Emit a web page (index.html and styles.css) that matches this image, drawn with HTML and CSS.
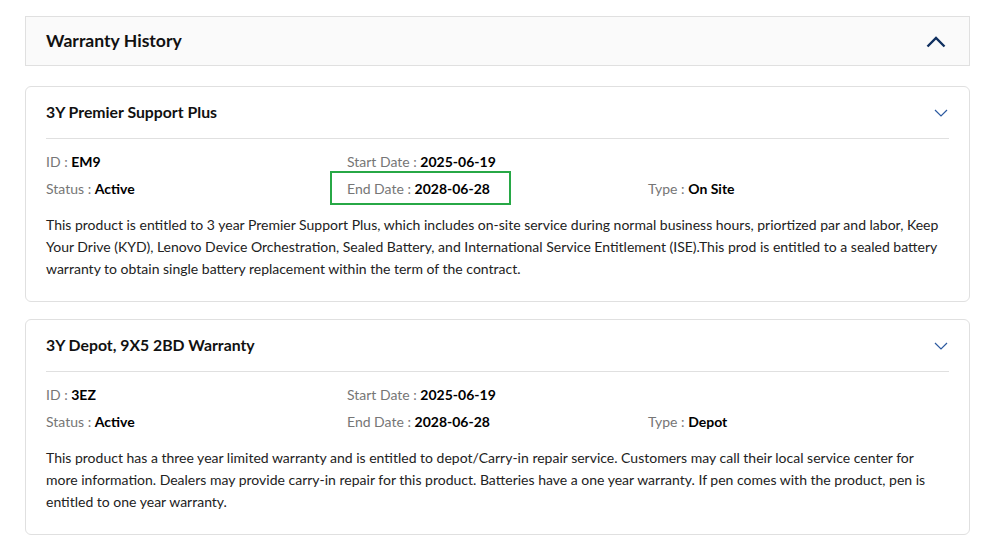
FILE: index.html
```html
<!DOCTYPE html>
<html lang="en">
<head>
  <meta charset="UTF-8">
  <meta name="viewport" content="width=device-width, initial-scale=1.0">
  <title>Warranty History</title>
  <link rel="stylesheet" href="styles.css">
</head>
<body>
  <div class="warranty">
    <div class="warranty-head">
      <h2>Warranty History</h2>
      <svg class="chev-up" width="20" height="12" viewBox="0 0 20 12"><path d="M1.5 10.5 L10 2 L18.5 10.5" fill="none" stroke="#0f2f5f" stroke-width="2.4"/></svg>
    </div>

    <div class="card">
      <div class="card-head">
        <h3>3Y Premier Support Plus</h3>
        <svg class="chev-down" width="14" height="8" viewBox="0 0 14 8"><path d="M1 1 L7 7 L13 1" fill="none" stroke="#2c5aa0" stroke-width="1.2"/></svg>
      </div>
      <div class="card-body">
        <div class="fields">
          <div class="field"><span class="label">ID : </span><b>EM9</b></div>
          <div class="field"><span class="label">Start Date : </span><b>2025-06-19</b></div>
          <div class="field"></div>
          <div class="field"><span class="label">Status : </span><b>Active</b></div>
          <div class="field"><span class="marked"><span class="label">End Date : </span><b>2028-06-28</b></span></div>
          <div class="field"><span class="label">Type : </span><b>On Site</b></div>
        </div>
        <p>This product is entitled to 3 year Premier Support Plus, which includes on-site service during normal business hours, priortized par and labor, Keep Your Drive (KYD), Lenovo Device Orchestration, Sealed Battery, and International Service Entitlement (ISE).This prod is entitled to a sealed battery warranty to obtain single battery replacement within the term of the contract.</p>
      </div>
    </div>

    <div class="card">
      <div class="card-head">
        <h3>3Y Depot, 9X5 2BD Warranty</h3>
        <svg class="chev-down" width="14" height="8" viewBox="0 0 14 8"><path d="M1 1 L7 7 L13 1" fill="none" stroke="#2c5aa0" stroke-width="1.2"/></svg>
      </div>
      <div class="card-body">
        <div class="fields">
          <div class="field"><span class="label">ID : </span><b>3EZ</b></div>
          <div class="field"><span class="label">Start Date : </span><b>2025-06-19</b></div>
          <div class="field"></div>
          <div class="field"><span class="label">Status : </span><b>Active</b></div>
          <div class="field"><span class="label">End Date : </span><b>2028-06-28</b></div>
          <div class="field"><span class="label">Type : </span><b>Depot</b></div>
        </div>
        <p>This product has a three year limited warranty and is entitled to depot/Carry-in repair service. Customers may call their local service center for more information. Dealers may provide carry-in repair for this product. Batteries have a one year warranty. If pen comes with the product, pen is entitled to one year warranty.</p>
      </div>
    </div>
  </div>
</body>
</html>
```

FILE: styles.css
```css
html, body {
  margin: 0;
  padding: 0;
  background: #fff;
  font-family: Lato, "Open Sans", Arial, sans-serif;
  color: #1f1f1f;
}
.warranty {
  width: 945px;
  padding: 16px 0 0 25px;
  display: flex;
  flex-direction: column;
}
.warranty-head {
  height: 48px;
  background: #fafafa;
  border: 1px solid #e0e0e0;
  display: flex;
  align-items: center;
  justify-content: space-between;
  padding: 0 23px 0 20px;
  margin-bottom: 20px;
}
.warranty-head h2 {
  margin: 0 0 2px;
  font-size: 17.6px;
  font-weight: 700;
  color: #111;
}
.chev-up {
  display: block;
  margin-top: 1px;
}
.card {
  border: 1px solid #e0e0e0;
  border-radius: 6px;
  padding: 0 20px;
  margin-bottom: 17px;
}
.card-head {
  height: 51px;
  border-bottom: 1px solid #e0e0e0;
  display: flex;
  align-items: center;
  justify-content: space-between;
}
.card-head h3 {
  margin: 0 0 3px;
  font-size: 15.8px;
  font-weight: 700;
  color: #111;
}
.chev-down {
  display: block;
  margin-right: 1px;
}
.card-body {
  padding: 13px 0 21px;
}
.fields {
  display: grid;
  grid-template-columns: repeat(3, 1fr);
  row-gap: 7px;
  font-size: 14px;
  line-height: 20px;
}
.label {
  color: #767676;
}
.field b {
  color: #000;
  font-weight: 700;
}
.marked {
  position: relative;
}
.marked::after {
  content: "";
  position: absolute;
  left: -17px;
  right: -21px;
  top: -9px;
  bottom: -8px;
  border: 2px solid #27a846;
}
.card-body p {
  margin: 15px 0 0;
  padding-right: 8px;
  font-size: 14px;
  line-height: 22px;
  color: #222;
}
```
